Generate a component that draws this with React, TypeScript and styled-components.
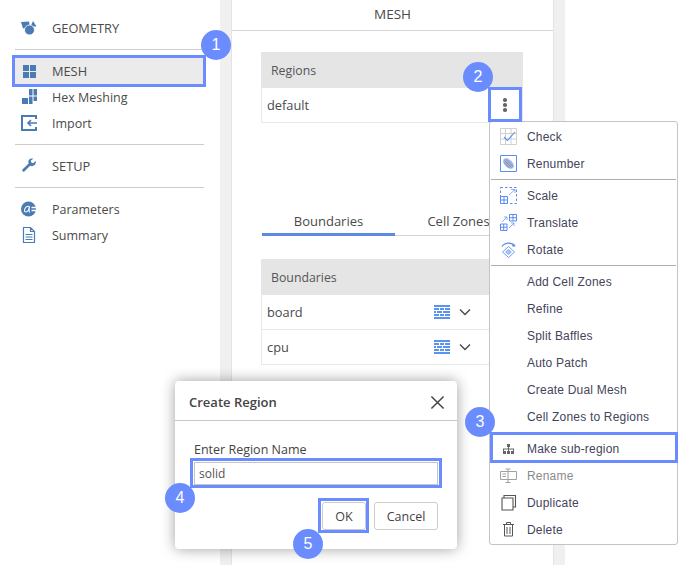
import React from "react";
import styled, { createGlobalStyle } from "styled-components";

const ACCENT = "#6a8cff";
const ICON = "#4a7bb5";
const MENU_BLUE = "#5b8def";

const Global = createGlobalStyle`
  html, body { margin: 0; padding: 0; background: #fff; }
  body { font-family: "Open Sans", sans-serif; color: #444; }
  * { box-sizing: border-box; }
`;

const Page = styled.div`
  position: relative;
  width: 700px;
  height: 565px;
  overflow: hidden;
  display: flex;
  background: #fff;
`;

const Sidebar = styled.nav`
  width: 220px;
  flex: none;
  padding: 15px 16px 0 15px;
  display: flex;
  flex-direction: column;
`;

const NavItem = styled.div<{ $active?: boolean; $caps?: boolean }>`
  height: 26px;
  flex: none;
  display: flex;
  align-items: center;
  font-size: ${(p) => (p.$caps ? "12.8px" : "12.5px")};
  color: #4a4a4a;
  background: ${(p) => (p.$active ? "#ebebeb" : "transparent")};
`;

const NavIcon = styled.svg`
  width: 18px;
  height: 18px;
  margin: 0 14px 0 5px;
  flex: none;
`;

const NavRule = styled.div`
  height: 1px;
  flex: none;
  background: #ccc;
  margin: 8px 0;
`;

const Main = styled.main`
  width: 345px;
  flex: none;
  background: #f0f0f0;
  padding: 0 11px;
`;

const Panel = styled.div`
  height: 100%;
  background: #fff;
  border-left: 1px solid #e4e4e4;
  border-right: 1px solid #e4e4e4;
`;

const PanelTitle = styled.div`
  height: 31px;
  border-bottom: 1px solid #d4d4d4;
  text-align: center;
  font-size: 13.5px;
  line-height: 28px;
  color: #4a4a4a;
`;

const Body = styled.div`
  padding: 21px 30px 0 29px;
`;

const TableHead = styled.div`
  height: 36px;
  background: #e5e5e5;
  padding-left: 10px;
  display: flex;
  align-items: center;
  font-size: 12.3px;
  font-weight: 500;
  color: #555;
`;

const Row = styled.div`
  height: 35px;
  border: 1px solid #e8e8e8;
  border-top: none;
  padding-left: 5px;
  display: flex;
  align-items: center;
  font-size: 12.8px;
  color: #4a4a4a;
`;

const RowActions = styled.div`
  margin-left: auto;
  margin-right: 51px;
  display: flex;
  align-items: center;
  gap: 9px;
`;

const Kebab = styled.div`
  margin-left: auto;
  width: 34px;
  display: flex;
  flex-direction: column;
  align-items: center;
  gap: 1.5px;
  i {
    display: block;
    width: 3.5px;
    height: 3.5px;
    border-radius: 50%;
    background: #666;
  }
`;

const Tabs = styled.div`
  margin: 90px 0 23px 1px;
  width: 261px;
  height: 23px;
  display: flex;
  border-bottom: 1px solid #d4d4d4;
`;

const Tab = styled.div<{ $active?: boolean; $w: number }>`
  width: ${(p) => p.$w}px;
  height: 23px;
  flex: none;
  text-align: center;
  font-size: 13px;
  line-height: 17px;
  color: #4a4a4a;
  white-space: nowrap;
  border-bottom: ${(p) => (p.$active ? "3px solid #5b8ae0" : "none")};
`;

const Menu = styled.div`
  position: absolute;
  left: 489px;
  top: 121px;
  width: 189px;
  height: 424px;
  background: #fff;
  border: 1px solid #c4c4c4;
  border-radius: 3px;
  padding-top: 1px;
  font-family: "Liberation Sans", sans-serif;
`;

const MenuItem = styled.div<{ $disabled?: boolean }>`
  height: 27px;
  display: flex;
  align-items: center;
  padding-left: 37px;
  position: relative;
  font-size: 12px;
  letter-spacing: 0.2px;
  color: ${(p) => (p.$disabled ? "#8a8a8a" : "#44445a")};
`;

const MenuIcon = styled.svg`
  position: absolute;
  left: 10px;
  top: 5px;
  width: 17px;
  height: 17px;
`;

const MenuRule = styled.div`
  height: 1px;
  background: #aeaeae;
  margin: 2px 1px;
`;

const Spacer = styled.div`
  height: 5px;
`;

const Dialog = styled.div`
  position: absolute;
  left: 175px;
  top: 381px;
  width: 282px;
  height: 168px;
  background: #fff;
  border-radius: 4px;
  box-shadow: 0 0 14px rgba(0, 0, 0, 0.38);
`;

const DialogHead = styled.div`
  height: 40px;
  border-bottom: 1px solid #c8c8c8;
  padding: 3px 12px 0 14px;
  display: flex;
  align-items: center;
  justify-content: space-between;
  font-size: 13px;
  font-weight: 600;
  color: #444;
`;

const DialogBody = styled.div`
  padding: 20px 19px 0 19px;
`;

const FieldLabel = styled.div`
  font-size: 12.5px;
  line-height: 17px;
  color: #444;
`;

const Field = styled.div`
  margin-top: 4px;
  height: 23px;
  border: 1px solid #c4c4c4;
  padding-left: 4px;
  display: flex;
  align-items: center;
  font-size: 12px;
  color: #555;
`;

const Buttons = styled.div`
  margin-top: 17px;
  display: flex;
  justify-content: flex-end;
  gap: 8px;
`;

const Btn = styled.div<{ $w: number }>`
  width: ${(p) => p.$w}px;
  height: 28px;
  border: 1px solid #ccc;
  border-radius: 3px;
  display: flex;
  align-items: center;
  justify-content: center;
  font-size: 12.5px;
  color: #444;
`;

const Highlight = styled.div<{ $x: number; $y: number; $w: number; $h: number }>`
  position: absolute;
  left: ${(p) => p.$x}px;
  top: ${(p) => p.$y}px;
  width: ${(p) => p.$w}px;
  height: ${(p) => p.$h}px;
  border: 3px solid ${ACCENT};
  pointer-events: none;
`;

const Badge = styled.div<{ $x: number; $y: number }>`
  position: absolute;
  left: ${(p) => p.$x - 15}px;
  top: ${(p) => p.$y - 15}px;
  width: 30px;
  height: 30px;
  border-radius: 50%;
  background: ${ACCENT};
  color: #fff;
  display: flex;
  align-items: center;
  justify-content: center;
  font-size: 16px;
  font-family: "Liberation Sans", sans-serif;
`;

const BrickSvg = () => (
  <svg width="16" height="14" viewBox="0 0 16 14" fill="#5b93f0">
    <path d="M0 0h16v2H0zM0 3h5v2H0zM6 3h4v2H6zM11 3h5v2h-5zM0 6h2v2H0zM3 6h5v2H3zM9 6h7v2H9zM0 9h5v2H0zM6 9h4v2H6zM11 9h5v2h-5zM0 12h16v2H0z" />
  </svg>
);

const Chevron = () => (
  <svg width="12" height="8" viewBox="0 0 12 8" fill="none" stroke="#4a4a4a" strokeWidth="1.4">
    <path d="M1 1.500l5 5 5-5" />
  </svg>
);

const grid = "#d0d0d0";

export default function App() {
  return (
    <Page>
      <Global />
      <Sidebar>
        <NavItem $caps>
          <NavIcon viewBox="0 0 18 18">
            <path d="M1 3l8-.5 1 5.500-7 1.500z" fill={ICON} />
            <path d="M13 2l3.500 5.500h-6z" fill={ICON} />
            <circle cx="9.500" cy="11" r="5" fill={ICON} stroke="#fff" strokeWidth=".8" />
          </NavIcon>
          GEOMETRY
        </NavItem>
        <NavRule />
        <NavItem $active $caps>
          <NavIcon viewBox="0 0 18 18" fill={ICON}>
            <path d="M3 3h6v6H3zM10 3h6v6h-6zM3 10h6v6H3zM10 10h6v6h-6z" />
          </NavIcon>
          MESH
        </NavItem>
        <NavItem>
          <NavIcon viewBox="0 0 18 18" fill={ICON}>
            <path d="M9 1h3.500v6.500H9zM13.500 1H17v6.500h-3.500zM13.500 8.500H17V13h-3.500zM9 8.500h3.500V16H9zM2 10h6v6H2z" />
          </NavIcon>
          Hex Meshing
        </NavItem>
        <NavItem>
          <NavIcon viewBox="0 0 18 18" fill="none" stroke={ICON} strokeWidth="2">
            <path d="M16 5V2H2v14h14v-3" />
            <path d="M17 9H8M11 6L8 9l3 3" strokeWidth="1.600" />
          </NavIcon>
          Import
        </NavItem>
        <NavRule />
        <NavItem $caps>
          <NavIcon viewBox="-1 -1 20 20" fill={ICON}>
            <path d="M16.500 3.500l-3 2.500-2-1-.5-2.200 2.800-1.800c-2.500-1-5.300.4-5.500 3-.1.800 0 1.500.3 2.200L2 12.500c-1.500 1.500.5 3.800 2.200 2.300l6-6c2.800 1 5.800-.2 6.300-3 .1-.8.1-1.500 0-2.300z" />
          </NavIcon>
          SETUP
        </NavItem>
        <NavRule />
        <NavItem>
          <NavIcon viewBox="0 0 18 18">
            <circle cx="8.500" cy="9" r="7.500" fill={ICON} />
            <path d="M9.500 6.500C7 5.500 4.500 8 4.500 10.500c0 2 2.500 2 4-.5l1-3.500c-.5 2-.8 4 0 6" fill="none" stroke="#fff" strokeWidth="1.100" />
            <path d="M11.500 7.500H17M11.500 10.500H17" stroke="#fff" strokeWidth="1.300" />
          </NavIcon>
          Parameters
        </NavItem>
        <NavItem>
          <NavIcon viewBox="0 0 18 18" fill="none" stroke={ICON} strokeWidth="1.200">
            <path d="M3.500 1.500h7l4 4v11h-11zM10.500 1.500v4h4M5.500 8.500h7M5.500 11h7M5.500 13.500h7" />
          </NavIcon>
          Summary
        </NavItem>
      </Sidebar>

      <Main>
        <Panel>
          <PanelTitle>MESH</PanelTitle>
          <Body>
            <TableHead>Regions</TableHead>
            <Row>
              default
              <Kebab>
                <i />
                <i />
                <i />
              </Kebab>
            </Row>
            <Tabs>
              <Tab $active $w={133}>Boundaries</Tab>
              <Tab $w={127}>Cell Zones</Tab>
            </Tabs>
            <TableHead>Boundaries</TableHead>
            <Row>
              board
              <RowActions>
                <BrickSvg />
                <Chevron />
              </RowActions>
            </Row>
            <Row>
              cpu
              <RowActions>
                <BrickSvg />
                <Chevron />
              </RowActions>
            </Row>
          </Body>
        </Panel>
      </Main>

      <Menu>
        <MenuItem>
          <MenuIcon viewBox="0 0 17 17" fill="none">
            <path d="M.5.500h16v16H.5zM.5 5.500h16M.5 11h16M5.500.500v16M11 .500v16" stroke={grid} />
            <path d="M4 9l3.500 3.500L15 4" stroke={MENU_BLUE} strokeWidth="1.100" />
          </MenuIcon>
          Check
        </MenuItem>
        <MenuItem>
          <MenuIcon viewBox="0 0 17 17" fill="none">
            <path d="M.5.500h16v16H.5z" stroke={MENU_BLUE} />
            <ellipse cx="8.500" cy="8.500" rx="6.500" ry="3.800" transform="rotate(45 8.500 8.500)" fill="#a9b6dc" />
            <path d="M4.500 5.500l7 7M6 4.500l7 7M3.800 7.500l5.500 5.500" stroke="#6f84bb" strokeWidth=".8" />
          </MenuIcon>
          Renumber
        </MenuItem>
        <MenuRule />
        <MenuItem>
          <MenuIcon viewBox="0 0 17 17" fill="none" stroke={MENU_BLUE}>
            <path d="M.5.500h16v16H.5z" strokeDasharray="2.500 2" />
            <path d="M.5 9.500h7v7h-7zM.5 13h7M4 9.500v7" fill="#fff" />
            <path d="M9 8l6-5.500M11 2.500h4V6" strokeWidth=".7" />
          </MenuIcon>
          Scale
        </MenuItem>
        <MenuItem>
          <MenuIcon viewBox="0 0 17 17" fill="none" stroke={MENU_BLUE}>
            <path d="M9.500.500h7v6.500h-7zM9.500 3.700h7M13 .500V7M.5 10h6.500v6.500H.5zM.5 13.200h6.500M3.700 10v6.500" />
            <path d="M2 8l5-5M4 3h3v3M9 14l5-5M11 9h3v3" strokeWidth=".7" />
          </MenuIcon>
          Translate
        </MenuItem>
        <MenuItem>
          <MenuIcon viewBox="0 0 17 17" fill="none" stroke={MENU_BLUE}>
            <path d="M2 5.500C5 1 12 1 15 5" strokeWidth="1.300" />
            <path d="M13 2.500l2.500 3L12 5.500z" fill={MENU_BLUE} stroke="none" />
            <path d="M8.500 5.500l6 5.500-6 5.500-6-5.500z" strokeWidth=".9" />
            <path d="M8.500 8.500l2.800 2.500-2.800 2.500-2.800-2.500z" fill={MENU_BLUE} fillOpacity=".5" strokeWidth=".7" />
          </MenuIcon>
          Rotate
        </MenuItem>
        <MenuRule />
        <MenuItem>Add Cell Zones</MenuItem>
        <MenuItem>Refine</MenuItem>
        <MenuItem>Split Baffles</MenuItem>
        <MenuItem>Auto Patch</MenuItem>
        <MenuItem>Create Dual Mesh</MenuItem>
        <MenuItem>Cell Zones to Regions</MenuItem>
        <Spacer />
        <MenuItem>
          <MenuIcon viewBox="0 0 17 17" fill="#666">
            <path d="M7 4h3v3H7zM3 11h3v3H3zM7 11h3v3H7zM11 11h3v3h-3z" />
            <path d="M8 7h1v1.500h5V11h-1V9.500H9V11H8V9.500H4V11H3V8.500h5z" />
          </MenuIcon>
          Make sub-region
        </MenuItem>
        <MenuItem $disabled>
          <MenuIcon viewBox="0 0 17 17" fill="none" stroke="#a0a0a0">
            <path d="M.5 4.500h16v8H.5z" />
            <path d="M2.500 7H6M2.500 9.500H6" />
            <path d="M5.500 2h5M5.500 15.500h5M8 2v13.500" />
          </MenuIcon>
          Rename
        </MenuItem>
        <MenuItem>
          <MenuIcon viewBox="0 0 17 17" fill="none" stroke="#555" strokeWidth="1.100">
            <path d="M2 4h11v12H2z" />
            <path d="M4 4V1.500h11.500V13H13" />
          </MenuIcon>
          Duplicate
        </MenuItem>
        <MenuItem>
          <MenuIcon viewBox="0 0 17 17" fill="none" stroke="#555">
            <path d="M3 3.500h11M6.500 3.500V1.500h4v2M4.500 3.500v11.500h8V3.500M7 6v7M10 6v7" />
          </MenuIcon>
          Delete
        </MenuItem>
      </Menu>

      <Dialog>
        <DialogHead>
          Create Region
          <svg width="15" height="15" viewBox="0 0 16 16" stroke="#444" strokeWidth="1.600">
            <path d="M1.500 1.500l13 13M14.500 1.500l-13 13" />
          </svg>
        </DialogHead>
        <DialogBody>
          <FieldLabel>Enter Region Name</FieldLabel>
          <Field>solid</Field>
          <Buttons>
            <Btn $w={44}>OK</Btn>
            <Btn $w={64}>Cancel</Btn>
          </Buttons>
        </DialogBody>
      </Dialog>

      <Highlight $x={12} $y={55} $w={194} $h={32} />
      <Highlight $x={488} $y={87} $w={34} $h={35} />
      <Highlight $x={490} $y={432} $w={188} $h={31} />
      <Highlight $x={190} $y={458} $w={252} $h={30} />
      <Highlight $x={318} $y={498} $w={51} $h={35} />
      <Badge $x={216} $y={45}>1</Badge>
      <Badge $x={478} $y={77}>2</Badge>
      <Badge $x={480} $y={422}>3</Badge>
      <Badge $x={180} $y={498}>4</Badge>
      <Badge $x={308} $y={544}>5</Badge>
    </Page>
  );
}
